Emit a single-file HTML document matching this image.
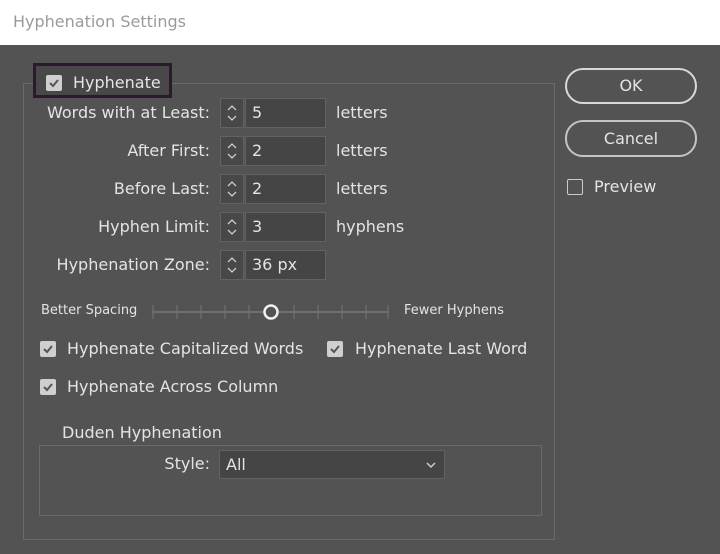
<html><head><style>
body{margin:0;width:720px;height:554px;background:#535353;font-family:"DejaVu Sans","Liberation Sans",sans-serif;color:#e4e4e4;position:relative;overflow:hidden;font-size:16px}
.a{position:absolute}
.t{position:absolute;white-space:nowrap;line-height:20px}
.r{text-align:right;width:200px}
.sp{position:absolute;width:24px;height:30px;border:1px solid #626262;background:#484848;box-sizing:border-box}
.in{position:absolute;height:30px;border:1px solid #626262;background:#454545;box-sizing:border-box;padding-left:6px;line-height:28px}
.cb{position:absolute;width:16px;height:16px;background:#cfcfcf;border-radius:2px}
.cb svg{position:absolute;left:2px;top:2px}
.btn{position:absolute;border:2px solid #d8d8d8;border-radius:18px;box-sizing:border-box;text-align:center}
</style></head><body>
<div class="a" style="left:0;top:0;width:720px;height:45px;background:#fff"></div>
<div class="t" style="left:13px;top:12px;color:#9a9a9a;font-size:16px">Hyphenation Settings</div>
<div class="a" style="left:23px;top:83px;width:532px;height:457px;border:1px solid #6a6a6a;box-sizing:border-box"></div>
<div class="a" style="left:33px;top:63px;width:139px;height:35px;background:#484848;border:3px solid #2b1a2c;box-sizing:border-box"></div>
<div class="cb" style="left:46px;top:75px"><svg width="12" height="12"><path d="M2 6 L5 9 L10 3" stroke="#555" stroke-width="2" fill="none"/></svg></div>
<div class="t" style="left:73px;top:73px">Hyphenate</div>

<div class="t r" style="left:10px;top:103px">Words with at Least:</div>
<div class="t r" style="left:10px;top:141px">After First:</div>
<div class="t r" style="left:10px;top:179px">Before Last:</div>
<div class="t r" style="left:10px;top:217px">Hyphen Limit:</div>
<div class="t r" style="left:10px;top:255px">Hyphenation Zone:</div>

<div id="sp"></div>
<script></script>
<div class="sp" style="left:220px;top:98px"><svg width="22" height="28"><path d="M7 11 L11 7 L15 11 M7 17 L11 21 L15 17" stroke="#ccc" stroke-width="1.3" fill="none"/></svg></div>
<div class="in" style="left:245px;top:98px;width:81px">5</div>
<div class="sp" style="left:220px;top:136px"><svg width="22" height="28"><path d="M7 11 L11 7 L15 11 M7 17 L11 21 L15 17" stroke="#ccc" stroke-width="1.3" fill="none"/></svg></div>
<div class="in" style="left:245px;top:136px;width:81px">2</div>
<div class="sp" style="left:220px;top:174px"><svg width="22" height="28"><path d="M7 11 L11 7 L15 11 M7 17 L11 21 L15 17" stroke="#ccc" stroke-width="1.3" fill="none"/></svg></div>
<div class="in" style="left:245px;top:174px;width:81px">2</div>
<div class="sp" style="left:220px;top:212px"><svg width="22" height="28"><path d="M7 11 L11 7 L15 11 M7 17 L11 21 L15 17" stroke="#ccc" stroke-width="1.3" fill="none"/></svg></div>
<div class="in" style="left:245px;top:212px;width:81px">3</div>
<div class="sp" style="left:220px;top:250px"><svg width="22" height="28"><path d="M7 11 L11 7 L15 11 M7 17 L11 21 L15 17" stroke="#ccc" stroke-width="1.3" fill="none"/></svg></div>
<div class="in" style="left:245px;top:250px;width:81px">36 px</div>

<div class="t" style="left:336px;top:103px">letters</div>
<div class="t" style="left:336px;top:141px">letters</div>
<div class="t" style="left:336px;top:179px">letters</div>
<div class="t" style="left:336px;top:217px">hyphens</div>

<div class="t" style="left:41px;top:301px;font-size:13px">Better Spacing</div>
<div class="t" style="left:404px;top:301px;font-size:13px">Fewer Hyphens</div>
<svg class="a" style="left:150px;top:300px" width="245" height="24"><path d="M3 12 H238" stroke="#777" stroke-width="1.5"/><g stroke="#777"><path d="M3 5V19M27 5V19M51 5V19M75 5V19M99 5V19M144 5V19M168 5V19M192 5V19M216 5V19M238 5V19"/></g><circle cx="121" cy="12" r="6.5" fill="#535353" stroke="#f0f0f0" stroke-width="2.5"/></svg>

<div class="cb" style="left:40px;top:341px"><svg width="12" height="12"><path d="M2 6 L5 9 L10 3" stroke="#555" stroke-width="2" fill="none"/></svg></div>
<div class="t" style="left:67px;top:339px">Hyphenate Capitalized Words</div>
<div class="cb" style="left:327px;top:341px"><svg width="12" height="12"><path d="M2 6 L5 9 L10 3" stroke="#555" stroke-width="2" fill="none"/></svg></div>
<div class="t" style="left:355px;top:339px">Hyphenate Last Word</div>
<div class="cb" style="left:40px;top:379px"><svg width="12" height="12"><path d="M2 6 L5 9 L10 3" stroke="#555" stroke-width="2" fill="none"/></svg></div>
<div class="t" style="left:67px;top:377px">Hyphenate Across Column</div>

<div class="a" style="left:39px;top:445px;width:503px;height:71px;border:1px solid #6a6a6a;box-sizing:border-box"></div>
<div class="t" style="left:56px;top:423px;background:#535353;padding:0 6px">Duden Hyphenation</div>
<div class="t r" style="left:10px;top:454px">Style:</div>
<div class="in" style="left:219px;top:450px;width:226px;height:29px;border-radius:2px">All<svg class="a" style="right:8px;top:10px" width="10" height="8"><path d="M1 2 L5 6 L9 2" stroke="#ccc" stroke-width="1.5" fill="none"/></svg></div>

<div class="btn" style="left:565px;top:68px;width:132px;height:36px;line-height:32px">OK</div>
<div class="btn" style="left:565px;top:120px;width:132px;height:37px;line-height:33px;border-color:#c4c4c4">Cancel</div>
<div class="a" style="left:567px;top:179px;width:16px;height:16px;border:1.5px solid #ccc;box-sizing:border-box;border-radius:2px"></div>
<div class="t" style="left:594px;top:177px">Preview</div>
</body></html>
